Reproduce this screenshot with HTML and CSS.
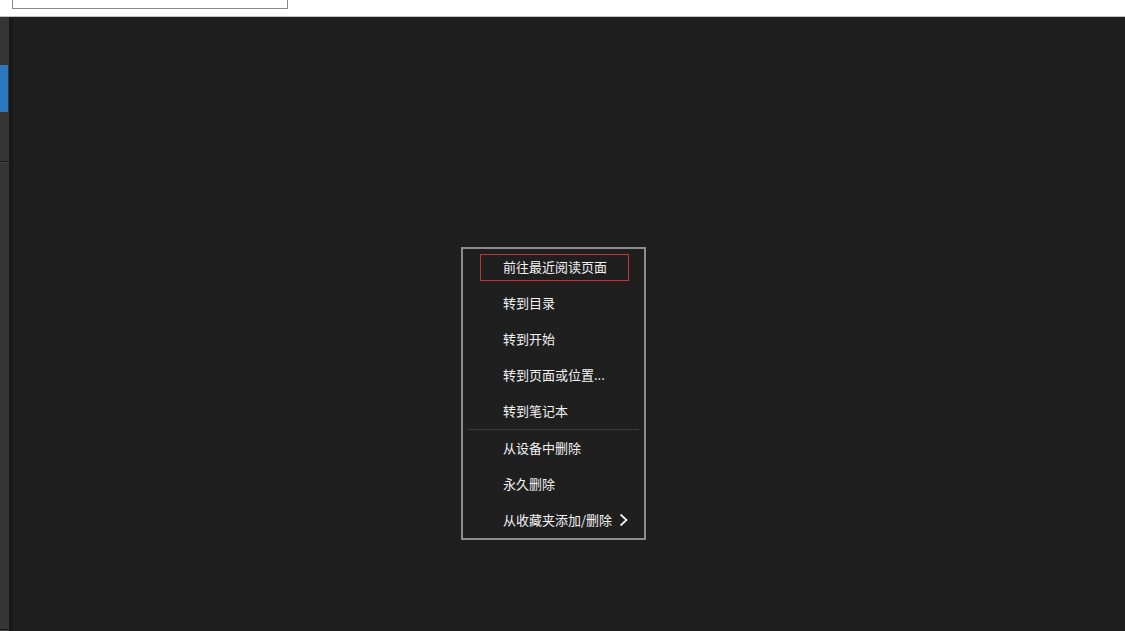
FILE: index.html
```
<!DOCTYPE html>
<html lang="zh">
<head>
<meta charset="utf-8">
<link rel="stylesheet" href="styles.css">
</head>
<body>
<div class="topbar"><div class="search"></div></div>
<div class="main">
  <div class="rail">
    <div class="rail-gap"></div>
    <div class="rail-active"></div>
    <div class="rail-gap2"></div>
    <div class="rail-sep"></div>
    <div class="rail-fill"></div>
    <div class="rail-sep"></div>
  </div>
  <div class="rail-edge"></div>
  <div class="content">
    <div class="menu">
      <div class="item focused">前往最近阅读页面</div>
      <div class="item">转到目录</div>
      <div class="item">转到开始</div>
      <div class="item">转到页面或位置...</div>
      <div class="item">转到笔记本</div>
      <div class="sep"></div>
      <div class="item">从设备中删除</div>
      <div class="item">永久删除</div>
      <div class="item sub">从收藏夹添加/删除<svg class="chev" width="10" height="14" viewBox="0 0 10 14"><polyline points="1.5,1.5 7.5,7 1.5,12.5" fill="none" stroke="#f0f0f0" stroke-width="1.8"/></svg></div>
    </div>
  </div>
</div>
</body>
</html>
```
FILE: styles.css
```
html, body { margin: 0; padding: 0; }
body {
  width: 1125px;
  height: 631px;
  overflow: hidden;
  background: #1e1e1e;
  font-family: "Noto Sans CJK SC", "Noto Sans", sans-serif;
}
.topbar {
  height: 16px;
  background: #ffffff;
  border-bottom: 1px solid #c4c4c4;
  padding-left: 12px;
}
.search {
  width: 274px;
  height: 8px;
  border: 1px solid #8a8a8a;
  border-top: none;
  background: #fff;
}
.main {
  display: flex;
  height: 614px;
}
.rail {
  width: 9px;
  background: #353535;
  display: flex;
  flex-direction: column;
}
.rail-gap { height: 48px; }
.rail-active { height: 47px; width: 8px; background: #2a78c0; }
.rail-gap2 { height: 49px; }
.rail-sep { height: 1px; background: #1c1c1c; border-bottom: 1px solid #444; }
.rail-fill { flex: 1; }
.rail-edge {
  width: 4px;
  background: #181818;
}
.content {
  flex: 1;
  position: relative;
  background: #1e1e1e;
}
.menu {
  position: absolute;
  left: 448px;
  top: 230px;
  width: 181px;
  border: 2px solid #8c8c8c;
  background: #1f1f1f;
  padding: 0;
  box-sizing: content-box;
}
.item {
  position: relative;
  height: 36px;
  line-height: 36px;
  padding-left: 40px;
  color: #f2f2f2;
  font-size: 13px;
  display: flex;
  align-items: center;
  white-space: nowrap;
}
.item.focused::after {
  content: "";
  position: absolute;
  left: 17px;
  right: 15px;
  top: 5px;
  bottom: 4px;
  border: 1px solid #c8333a;
}
.chev { margin-left: 7px; }
.sep {
  height: 1px;
  background: #3c3c3c;
  margin: 0 5px;
}
```
